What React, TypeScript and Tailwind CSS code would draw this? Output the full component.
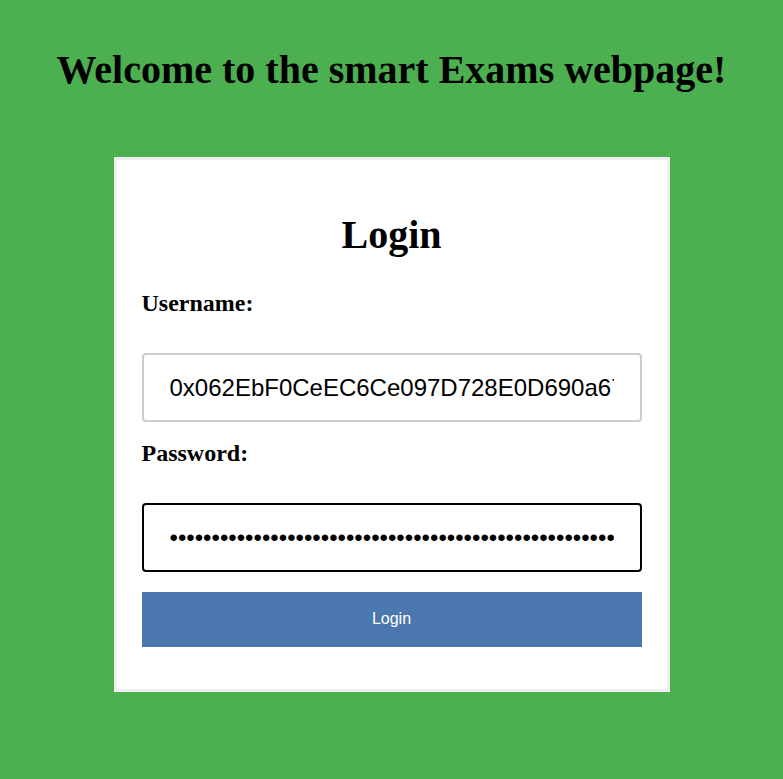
import { useState } from "react";

export default function App() {
  const [username, setUsername] = useState("0x062EbF0CeEC6Ce097D728E0D690a67DC5cF1b8e2");
  const [password, setPassword] = useState("a".repeat(53));

  return (
    <div className="min-h-screen bg-[#4caf50] flex flex-col items-center font-['Liberation_Serif',serif] text-black">
      <h1 className="mt-[47px] text-[40px] font-bold leading-[46px]">Welcome to the smart Exams webpage!</h1>

      <form
        className="mt-[64px] w-[556px] border-[3px] border-[#efefef] bg-white px-[25px] pt-[52px] pb-[42px] flex flex-col"
        onSubmit={(e) => e.preventDefault()}
      >
        <h2 className="text-center text-[40px] font-bold leading-[46px]">Login</h2>

        <label htmlFor="username" className="mt-[31px] text-[24px] font-bold leading-[28px]">
          Username:
        </label>
        <input
          id="username"
          type="text"
          value={username}
          onChange={(e) => setUsername(e.target.value)}
          className="mt-[36px] h-[69px] w-full rounded-[4px] border-2 border-[#cccccc] px-[26px] font-['Liberation_Sans',Arial,sans-serif] text-[24px] outline-none"
        />

        <label htmlFor="password" className="mt-[17px] text-[24px] font-bold leading-[28px]">
          Password:
        </label>
        <input
          id="password"
          type="password"
          value={password}
          onChange={(e) => setPassword(e.target.value)}
          className="mt-[36px] h-[69px] w-full rounded-[4px] border-2 border-black px-[26px] font-['Liberation_Sans',Arial,sans-serif] text-[24px] outline-none"
        />

        <button
          type="submit"
          className="mt-[20px] h-[55px] w-full bg-[#4b77af] pb-[2px] font-['Liberation_Sans',Arial,sans-serif] text-[16px] text-white"
        >
          Login
        </button>
      </form>
    </div>
  );
}
